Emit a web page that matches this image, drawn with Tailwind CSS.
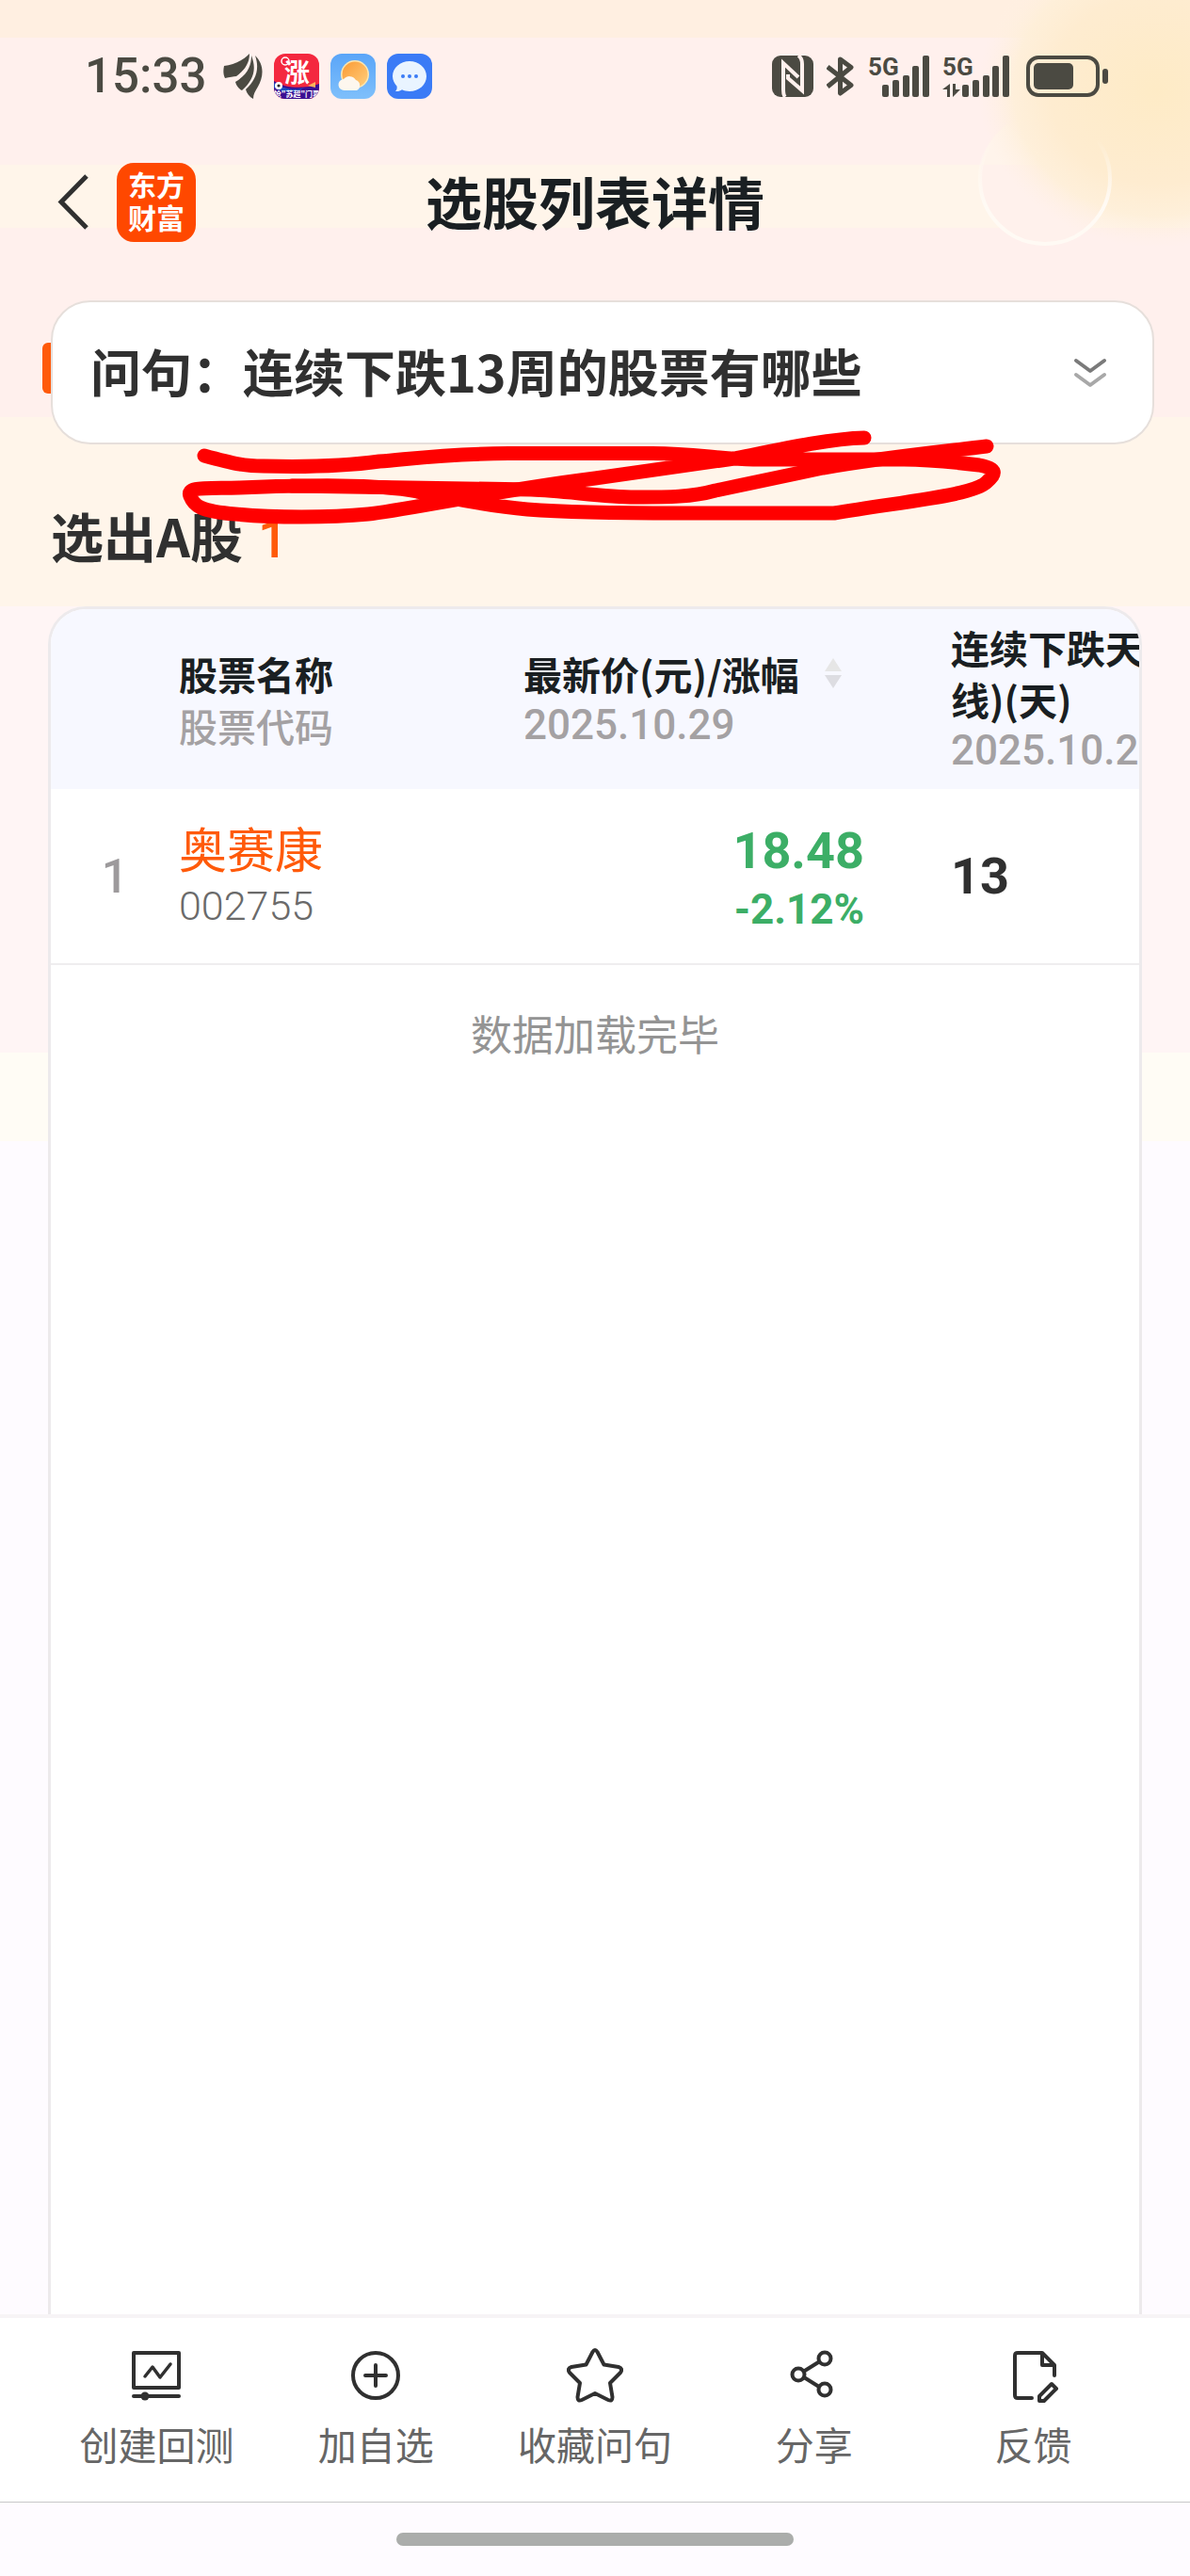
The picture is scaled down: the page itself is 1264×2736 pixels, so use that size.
<!DOCTYPE html>
<html lang="zh-CN">
<head>
    <meta charset="UTF-8">
    <meta name="viewport" content="width=device-width, initial-scale=1.0">
    <title>选股列表详情</title>
    <script src="https://cdn.jsdelivr.net/npm/@tailwindcss/browser@4"></script>
</head>
<body class="font-['Noto_Sans_CJK_SC',sans-serif] text-[#303030] bg-[#fefbff]">
    <div class="relative min-h-screen flex flex-col overflow-hidden bg-[linear-gradient(to_bottom,#ffefe1_0_40px,#fff0ed_40px_175px,#fff5ea_175px_242px,#fff0ed_242px_443px,#fff5ea_443px_644px,#fff5f5_644px_1118px,#fffcf5_1118px_1212px,#fefbff_1212px)]">

        <!-- glow and ring in the corner -->
        <svg class="absolute top-0 right-0 w-[300px] h-[300px]" viewBox="0 0 300 300" fill="none" aria-hidden="true">
            <defs>
                <radialGradient id="glow" cx="0.5" cy="0.5" r="0.5">
                    <stop offset="0" stop-color="#feebc6"/>
                    <stop offset="0.6" stop-color="#feecd0"/>
                    <stop offset="0.8" stop-color="#feefd8" stop-opacity="0.9"/>
                    <stop offset="1" stop-color="#fff0e4" stop-opacity="0"/>
                </radialGradient>
                <linearGradient id="ring" x1="0" y1="0" x2="0" y2="1">
                    <stop offset="0.2" stop-color="#fffaf2" stop-opacity="0"/>
                    <stop offset="0.7" stop-color="#fffaf4"/>
                </linearGradient>
            </defs>
            <circle cx="146" cy="190" r="69" fill="#fff1ec"/>
            <path d="M78 175a69 69 0 0 1 28-43l50 43z" fill="#fff4eb"/>
            <ellipse cx="265" cy="95" rx="190" ry="168" fill="url(#glow)"/>
            <circle cx="146" cy="190" r="69" stroke="url(#ring)" stroke-width="4"/>
        </svg>

        <!-- status bar -->
        <div class="relative h-[162px] pl-[90px] pr-[86px] flex items-center justify-between text-[#4b4a42]">
            <div class="flex items-center gap-3">
                <span class="font-[Roboto,sans-serif] font-medium text-[51px] leading-[60px] mr-1.5">15:33</span>
                <svg class="w-[42px] h-12" viewBox="0 0 42 48" fill="currentColor" aria-hidden="true">
                    <path d="M28 0C20 8 11 12 1 13c-1 5-1 9 1 13 5-1 9-2 12-2C22 18 28 11 28 0z"/>
                    <path d="M30 2c0 11-4 20-17 28 1 4 4 8 7 9C32 28 36 17 30 2z"/>
                    <path d="M34 2c5 14 1 26-10 36 1 4 4 8 8 10 0-5 2-8 5-13 6-11 7-23-3-33z"/>
                </svg>
                <span class="relative size-12 rounded-xl overflow-hidden bg-[#f4283f]">
                    <svg class="absolute inset-0 size-12" viewBox="0 0 48 48" aria-hidden="true">
                        <path d="M0 29c12 8 32 9 48 3v16H0z" fill="#3b1092"/>
                        <path d="M0 31c12 8 26 8 32 5l-6 4C16 42 6 40 0 36z" fill="#1d4fc0"/>
                        <path d="M36 34l8-4v6z" fill="#fdb35c"/>
                        <circle cx="5" cy="34" r="4" fill="#fff"/>
                        <circle cx="5" cy="34" r="1.6" fill="#222"/>
                        <circle cx="12" cy="8" r="4" fill="none" stroke="#fff" stroke-width="1.5"/>
                    </svg>
                    <span class="relative flex flex-col items-center text-white font-bold whitespace-nowrap">
                        <span class="text-[27px] leading-[38px]">涨</span>
                        <span class="text-[8px] leading-[10px]">抢"苏超"门票</span>
                    </span>
                </span>
                <svg class="size-12" viewBox="0 0 48 48" aria-hidden="true">
                    <defs>
                        <linearGradient id="sky" x1="0" y1="0" x2="0" y2="1"><stop stop-color="#5aa5f8"/><stop offset="1" stop-color="#7fc0fb"/></linearGradient>
                        <linearGradient id="sun" x1="0" y1="0" x2="1" y2="1"><stop stop-color="#fb9a34"/><stop offset="1" stop-color="#ffcf7d"/></linearGradient>
                    </defs>
                    <rect width="48" height="48" rx="12" fill="url(#sky)"/>
                    <circle cx="26" cy="22" r="15" fill="#ffe7b0"/>
                    <circle cx="26" cy="22" r="13.5" fill="url(#sun)"/>
                    <path d="M15 39a6 6 0 0 1-1-12 8 8 0 0 1 13 1 6 6 0 0 1 1 11z" fill="#fdf7ee"/>
                </svg>
                <svg class="size-12" viewBox="0 0 48 48" aria-hidden="true">
                    <rect width="48" height="48" rx="12" fill="#3a7bf6"/>
                    <path d="M24 8c10 0 18 7 18 16s-8 16-18 16c-3 0-6-.6-8-1.700-2 1.500-4 2-7 1.700 1.500-1.500 2-3.500 1.500-5.500C8 31.500 6 28 6 24 6 15 14 8 24 8z" fill="#e9f4ff"/>
                    <circle cx="17" cy="24" r="2" fill="#3a7bf6"/><circle cx="24" cy="24" r="2" fill="#3a7bf6"/><circle cx="31" cy="24" r="2" fill="#3a7bf6"/>
                </svg>
            </div>

            <div class="flex items-center gap-[14px]">
                <svg class="size-11" viewBox="0 0 44 44" aria-hidden="true">
                    <rect width="44" height="44" rx="9" fill="currentColor"/>
                    <path d="M14 44Q12 42 12 36V8L28 23M17 20V24L32 37V9Q32 3 28 0" fill="none" stroke="#fff0ed" stroke-width="4"/>
                </svg>
                <svg class="w-[30px] h-[44px]" viewBox="0 0 30 44" fill="none" stroke="currentColor" stroke-width="5" stroke-linejoin="round" aria-hidden="true">
                    <path d="M1 12l25 19.500L14.500 40V4L26 12.500 1 33"/>
                </svg>
                <span class="relative w-[65px] h-11">
                    <span class="absolute top-0 left-0 font-[Roboto,sans-serif] font-bold text-[26px] leading-[24px]">5G</span>
                    <svg class="w-[65px] h-11" viewBox="0 0 65 44" fill="currentColor" aria-hidden="true">
                        <rect x="15" y="31" width="7" height="13" rx="2"/><rect x="26" y="26" width="7" height="18" rx="2"/><rect x="37" y="21" width="7" height="23" rx="2"/><rect x="47" y="11" width="7" height="33" rx="2"/><rect x="58" width="7" height="44" rx="2"/>
                    </svg>
                </span>
                <span class="relative w-[71px] h-11">
                    <span class="absolute top-0 left-0 font-[Roboto,sans-serif] font-bold text-[26px] leading-[24px]">5G</span>
                    <svg class="w-[71px] h-11" viewBox="0 0 71 44" fill="currentColor" aria-hidden="true">
                        <path d="M8 30v14H5v-8H0zM11 30h3v6h5l-8 8z"/>
                        <rect x="21" y="31" width="7" height="13" rx="2"/><rect x="32" y="26" width="7" height="18" rx="2"/><rect x="43" y="21" width="7" height="23" rx="2"/><rect x="53" y="11" width="7" height="33" rx="2"/><rect x="64" width="7" height="44" rx="2"/>
                    </svg>
                </span>
                <svg class="w-[88px] h-11 ml-1" viewBox="0 0 88 44" aria-hidden="true">
                    <rect x="2" y="2" width="74" height="40" rx="11" fill="none" stroke="currentColor" stroke-width="4"/>
                    <rect x="8" y="8" width="42" height="28" rx="5" fill="currentColor"/>
                    <rect x="81" y="14" width="6" height="16" rx="3" fill="currentColor"/>
                </svg>
            </div>
        </div>

        <!-- title bar -->
        <header class="relative h-[106px] px-[60px] grid grid-cols-[1fr_auto_1fr] items-center">
            <div class="flex items-center gap-7">
                <button type="button" aria-label="返回">
                    <svg class="w-9 h-[60px]" viewBox="0 0 36 60" fill="none" stroke="#303030" stroke-width="5"><path d="M32 2L5 29.500 32 57"/></svg>
                </button>
                <span class="size-[84px] pb-1 rounded-[18px] bg-[#ff4800] text-white font-bold text-[30px] leading-[35px] text-center flex flex-col justify-center"><span>东方</span><span>财富</span></span>
            </div>
            <h1 class="pb-1 font-bold text-[60px] leading-[80px] text-[#1a1f22]">选股列表详情</h1>
        </header>

        <main class="relative flex-1 flex flex-col">
            <div class="relative mt-[51px] ml-[54px] mr-[38px]">
                <span class="absolute -left-[9px] top-[45px] w-5 h-[54px] rounded-md bg-[#ff5a0a]"></span>
                <button type="button" class="relative w-full h-[153px] rounded-[42px] border-2 border-[#e6dfdb] bg-white pl-10 pr-12 flex items-center justify-between">
                    <span class="pb-1 font-bold text-[54px] leading-[72px]">问句：连续下跌13周的股票有哪些</span>
                    <svg class="w-[36px] h-8" viewBox="0 0 36 32" fill="none" stroke-width="4" stroke-linecap="round" stroke-linejoin="round" aria-hidden="true">
                        <path d="M3 3l15 11L33 3" stroke="#7a7a7a"/><path d="M3 18l15 11 15-11" stroke="#a8a8a8"/>
                    </svg>
                </button>
                <!-- red marker scribble -->
                <svg class="absolute left-[136px] top-[136px] w-[880px] h-[110px] z-10 pointer-events-none" viewBox="190 455 880 110" fill="none" stroke="#ff0000" stroke-width="15" stroke-linecap="round" stroke-linejoin="round" aria-hidden="true">
                    <path d="M217 484C250 493 260 495 280 495C320 496 360 496 403 490C440 487 475 482 540 481.500H690C735 481 765 488 800 488H960C990 488 1015 491 1040 494C1060 498 1058 503 1048 512C1035 525 980 530 886 545H720C660 545 600 544 560 541C510 537 480 528 443 522C400 514 330 515 254 518C215 519 198 517 202 527C206 537 212 543 250 546C290 550 350 550 391 546C430 542 520 522 632 508L780 487C830 477 880 466 918 465"/>
                    <path d="M310 516L564 520C600 521 640 528 675 528C710 528 735 528 760 521L874 497C930 487 980 482 1048 474"/>
                </svg>
            </div>

            <h2 class="h-[172px] pt-14 pl-[54px] flex items-baseline gap-4 font-bold text-[56px] leading-[80px]">选出A股 <span class="font-[Roboto,sans-serif] font-medium text-[#ff5a0a]">1</span></h2>

            <section class="flex-1 mx-[51px] rounded-t-[40px] border-[3px] border-b-0 border-[#edeaec] bg-white overflow-hidden">
                <table class="table-fixed w-[1400px] text-left font-medium">
                    <colgroup>
                        <col class="w-[136px]"><col class="w-[366px]"><col class="w-[454px]"><col class="w-[444px]">
                    </colgroup>
                    <thead class="bg-[#f7f8ff] text-[41px] leading-[55px] text-[#1a1f22]">
                        <tr class="h-[191px]">
                            <td></td>
                            <th scope="col" class="font-bold">股票名称<div class="font-medium text-[#a4a1a3]">股票代码</div></th>
                            <th scope="col" class="font-bold">
                                <div class="flex items-center gap-[26px]">最新价(元)/涨幅
                                    <button type="button" aria-label="排序"><svg class="w-5 h-8" viewBox="0 0 20 32" aria-hidden="true"><path d="M10 0l9 14H1z" fill="#e6e6e6"/><path d="M10 32l9-14H1z" fill="#dddde2"/></svg></button>
                                </div>
                                <div class="font-[Roboto,sans-serif] font-medium text-[44px] text-[#a4a1a3]">2025.10.29</div>
                            </th>
                            <th scope="col" class="font-bold">连续下跌天数(日<br>线)(天)<div class="font-[Roboto,sans-serif] font-medium text-[44px] text-[#a4a1a3]">2025.10.29</div></th>
                        </tr>
                    </thead>
                    <tbody class="leading-[62px]">
                        <tr class="h-[186px] border-b-2 border-[#efedef]">
                            <td class="font-[Roboto,sans-serif] text-[50px] text-[#9d9a9c] text-center">1</td>
                            <td class="font-normal"><a href="#" class="block text-[51px] text-[#ff5a0a]">奥赛康</a><span class="block font-[Roboto,sans-serif] font-light text-[43px] text-[#6a6a6a]">002755</span></td>
                            <td class="font-[Roboto,sans-serif] font-bold text-right text-[#3cae66] pt-2 pr-[92px]"><div class="text-[54px]">18.48</div><div class="text-[44px]">-2.12%</div></td>
                            <td class="font-[Roboto,sans-serif] font-bold text-[54px]">13</td>
                        </tr>
                    </tbody>
                </table>
                <p class="pt-[42px] text-center text-[44px] leading-[60px] text-[#949494]">数据加载完毕</p>
            </section>
        </main>

        <!-- bottom toolbar -->
        <nav class="relative bg-white px-[50px] pt-[31px] pb-[34px] grid grid-cols-5 border-b border-[#c8c8c8] shadow-[0_-4px_0_#f7f4f6] text-[41px] leading-[56px] text-[#666666]">
            <button type="button" class="flex flex-col items-center gap-[14px]">
                <svg class="size-[60px]" viewBox="0 0 60 60" fill="none" stroke="#303030" stroke-width="4" stroke-linecap="round" stroke-linejoin="round" aria-hidden="true">
                    <path d="M6 6h48v37H6z"/><path d="M18 31l8-10 8 11 11-14" stroke-width="3.500"/><path d="M6 52h48"/><circle cx="18" cy="52" r="4.500" fill="#303030" stroke="none"/>
                </svg>
                创建回测
            </button>
            <button type="button" class="flex flex-col items-center gap-[14px]">
                <svg class="size-[60px]" viewBox="0 0 60 60" fill="none" stroke="#303030" stroke-width="4" stroke-linecap="round" aria-hidden="true">
                    <circle cx="30" cy="30" r="24"/><path d="M30 19v22M19 30h22"/>
                </svg>
                加自选
            </button>
            <button type="button" class="flex flex-col items-center gap-[14px]">
                <svg class="size-[60px]" viewBox="0 0 60 60" fill="none" stroke="#303030" stroke-width="4" stroke-linejoin="round" aria-hidden="true">
                    <path d="M27.500 5Q30 1 32.500 5L39.500 18.500 55 21Q60 22.500 57 27L46 38 48.500 53Q48.500 58 44 56L30 49 16 56Q11.500 58 11.500 53L14 38 3 27Q0 22.500 5 21L20.500 18.500z"/>
                </svg>
                收藏问句
            </button>
            <button type="button" class="flex flex-col items-center gap-[14px]">
                <svg class="size-[60px]" viewBox="0 0 60 60" fill="none" stroke="#303030" stroke-width="4" aria-hidden="true">
                    <circle cx="41" cy="12" r="6.500"/><circle cx="13" cy="29" r="6.500"/><circle cx="41" cy="45" r="6.500"/><path d="M19 25.500l16-10M19 32l16 10"/>
                </svg>
                分享
            </button>
            <button type="button" class="flex flex-col items-center gap-[14px]">
                <svg class="size-[60px]" viewBox="0 0 60 60" fill="none" stroke="#303030" stroke-width="4" stroke-linecap="round" stroke-linejoin="round" aria-hidden="true">
                    <path d="M28 54H13q-3 0-3-3V9q0-3 3-3h26l13 13v11M39 6v13h13"/><path d="M36 52l13-13 5 5-13 13h-5z"/>
                </svg>
                反馈
            </button>
        </nav>
        <div class="relative bg-[#fefbff] py-8 flex justify-center">
            <span class="w-1/3 h-[14px] rounded-full bg-[#abadab]"></span>
        </div>
    </div>
</body>
</html>
